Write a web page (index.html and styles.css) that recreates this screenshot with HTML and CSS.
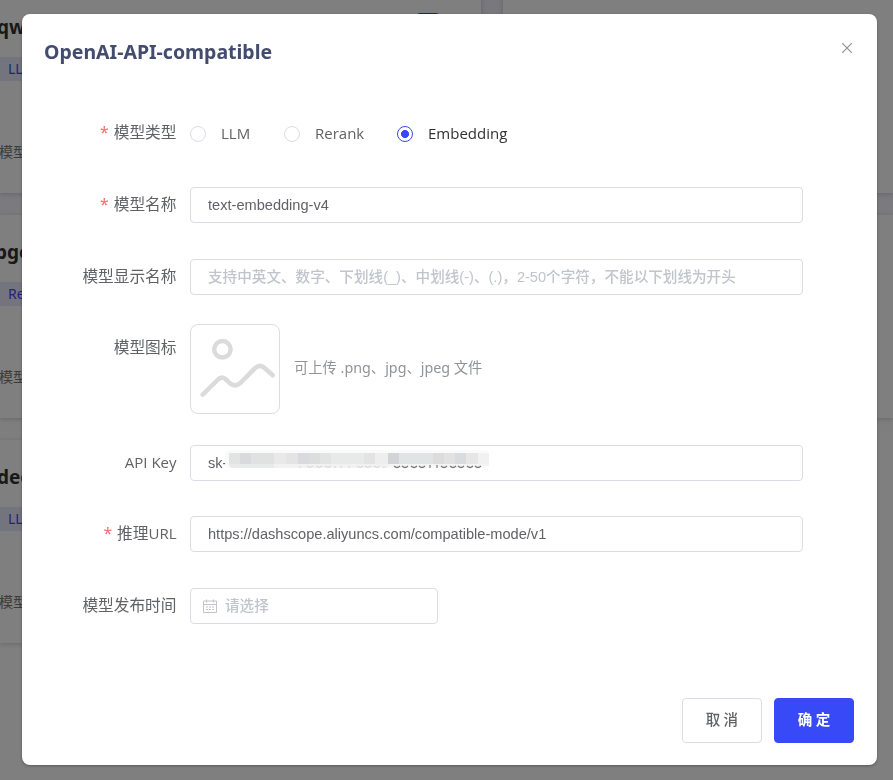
FILE: index.html
```html
<!DOCTYPE html>
<html lang="zh-CN">
<head>
<meta charset="utf-8">
<title>OpenAI-API-compatible</title>
<link rel="stylesheet" href="styles.css">
</head>
<body>
<main class="models">
  <article class="card"><i class="switch"></i><h3>qw</h3><span class="tag">LLM</span><p>模型</p></article>
  <article class="card"></article>
  <article class="card"><h3 class="shift">bge</h3><span class="tag">Re</span><p>模型</p></article>
  <article class="card"></article>
  <article class="card"><h3>dee</h3><span class="tag">LLM</span><p>模型</p></article>
</main>
<div class="mask">
  <section class="dialog">
    <header class="head">
      <h2>OpenAI-API-compatible</h2>
      <svg class="close" viewBox="0 0 12 12"><path d="M1.200 1.200l9.600 9.600M10.800 1.200l-9.600 9.600"/></svg>
    </header>
    <form class="form">
      <div class="row type">
        <label class="label"><i>*</i>模型类型</label>
        <div class="radios">
          <span class="radio"><b></b><span class="t1">LLM</span></span>
          <span class="radio"><b></b><span class="t2">Rerank</span></span>
          <span class="radio on"><b></b><span class="t3">Embedding</span></span>
        </div>
      </div>
      <div class="row name">
        <label class="label"><i>*</i>模型名称</label>
        <input class="input" value="text-embedding-v4">
      </div>
      <div class="row show">
        <label class="label">模型显示名称</label>
        <input class="input" placeholder="支持中英文、数字、下划线(_)、中划线(-)、(.)，2-50个字符，不能以下划线为开头">
      </div>
      <div class="row icon">
        <label class="label">模型图标</label>
        <div class="upload">
          <svg viewBox="0 0 88 88"><circle cx="31.400" cy="24.300" r="8.200"/><path d="M11.700 69.700L26.500 55Q30.700 50.500 35 54.500L39 58.300Q44 62.500 49 58.300L64 43.200Q68.500 38.800 73 42.500L81.700 50.300"/></svg>
        </div>
        <span class="hint">可上传 .png、jpg、jpeg 文件</span>
      </div>
      <div class="row key">
        <label class="label lat">API Key</label>
        <div class="keybox">
          <input class="input" value="sk-">
          <svg class="mosaic" viewBox="0 0 270 22">
            <rect x="1" y="1" width="264" height="18" rx="5" fill="#fafafa"/>
            <g shape-rendering="crispEdges">
              <path fill="#e2e3e3" d="M5 4h11v11H5zM140 4h11v11h-11z"/>
              <path fill="#d9dadb" d="M16 4h11v11H16z"/>
              <path fill="#e0e1e1" d="M27 4h23v11H27z"/>
              <path fill="#e9e9e9" d="M50 4h12v11H50z"/>
              <path fill="#e4e4e4" d="M62 4h12v11H62z"/>
              <path fill="#d9dadd" d="M74 4h11v11H74z"/>
              <path fill="#dcdddd" d="M85 4h11v11H85z"/>
              <path fill="#e2e4e4" d="M96 4h11v11H96z"/>
              <path fill="#e8eae9" d="M107 4h33v11h-33z"/>
              <path fill="#eee" d="M151 4h13v11h-13z"/>
              <path fill="#d3d4d7" d="M164 4h11v11h-11z"/>
              <path fill="#e1e4e4" d="M175 4h34v11h-34z"/>
              <path fill="#dcdcdc" d="M209 4h11v11h-11z"/>
              <path fill="#e2e2e2" d="M220 4h11v11h-11z"/>
              <path fill="#dadbdc" d="M231 4h11v11h-11z"/>
              <path fill="#e6e6e6" d="M242 4h12v11h-12z"/>
              <path fill="#f1f1f1" d="M254 4h11v11h-11z"/>
              <path fill="#e9ebea" d="M5 15h45v4H9q-4 0-4-4z"/>
              <path fill="#f2f2f2" d="M50 15h114v4H50z"/>
              <path fill="#f4f4f4" d="M164 15h101v2H164z"/>
            </g>
            <path class="faint" d="M76 17v2M83 17q3 3 6 0M92 17q3 3 6 0M101 17q3 3 6 0M111 17v2M117 17v2M125 17v2M133 17q3 3 6 0M141 17q3 3 6 0M150 17q3 3 6 0M160 17v2"/>
            <path class="edge" d="M170 17q3 3 6 0M178 17q3 3 6 0M187 17q3 3 6 0M195 17q3 3 6 0M206 16v3M213 16v3M217 17q3 3 6 0M226 17q3 3 6 0M234 17q3 3 6 0M243 17q3 3 6 0M251 17q3 3 6 0"/>
          </svg>
        </div>
      </div>
      <div class="row url">
        <label class="label"><i>*</i>推理<span class="lat">URL</span></label>
        <input class="input" value="https://dashscope.aliyuncs.com/compatible-mode/v1">
      </div>
      <div class="row date">
        <label class="label">模型发布时间</label>
        <div class="input picker">
          <svg viewBox="0 0 14 14"><path d="M.5 2h13v11.500H.5zM.5 5.500h13M3.500 .5v3M10.500 .5v3M3 8h2M6 8h2M9 8h2M3 10.500h2M6 10.500h2M9 10.500h2"/></svg>
          <span>请选择</span>
        </div>
      </div>
    </form>
    <footer class="foot">
      <button class="btn">取 消</button>
      <button class="btn primary">确 定</button>
    </footer>
  </section>
</div>
</body>
</html>
```
FILE: styles.css
```css
* { box-sizing: border-box; }
body { margin: 0; height: 780px; overflow: hidden; background: linear-gradient(#f0f0fc 0, #fff 480px); font-family: "Noto Sans", "Noto Sans CJK SC", sans-serif; }
.models { display: grid; grid-template-columns: 481px 390px; grid-auto-rows: 203px; gap: 22px; height: 780px; margin-top: -10px; overflow: hidden; }
.card { position: relative; background: #fff; box-shadow: 0 1px 5px rgba(60, 60, 90, .25); padding: 20px 0 0; }
.card h3 { margin: 0 0 0 -3px; font-size: 19px; line-height: 34px; color: #303133; }
.card .shift { margin-left: -5px; }
.switch { position: absolute; left: 417px; top: 23px; width: 22px; height: 10px; border-radius: 3px; background: #384af7; }
.tag { display: block; width: 60px; height: 24px; margin-top: 13px; padding-left: 8px; background: #e8e9ff; color: #384af7; font-size: 14px; line-height: 24px; }
.card p { margin: 60px 0 0 -1px; font-size: 14px; line-height: 22px; color: #777; }
.mask { position: fixed; inset: 0; padding: 14px 16px 15px 22px; background: rgba(0, 0, 0, .5); }
.dialog { display: flex; flex-direction: column; height: 751px; border-radius: 8px; background: #fff; box-shadow: 0 1px 3px rgba(0, 0, 0, .3); }
.head { display: flex; justify-content: space-between; padding: 24px 24px 0 22px; }
.head h2 { margin: 0; font-size: 19.500px; line-height: 28px; color: #434c6e; }
.close { width: 12px; height: 12px; margin-top: 3.500px; fill: none; stroke: #909399; stroke-width: 1.200; }
.form { padding: 49px 74px 0 0; flex: 1; }
.row { display: flex; height: 36px; margin-bottom: 36px; }
.label { width: 168px; padding-right: 13.500px; margin-top: -1px; flex: none; text-align: right; font: 15.700px/36px "Noto Sans CJK SC", sans-serif; color: #606266; }
.label i { font-style: normal; color: #f56c6c; margin-right: 5px; font-family: "Noto Sans"; }
.lat { font-family: "Open Sans", "Noto Sans", sans-serif; font-size: 15px; }
.input { flex: 1; width: 100%; height: 36px; padding: 0 17px; border: 1px solid #dcdce6; border-radius: 4px; outline: 0; background: #fff; color: #606266; font: 14.600px "Liberation Sans", "Noto Sans CJK SC", sans-serif; }
.input::placeholder { color: #c0c4cc; font-weight: 500; }
.radios { display: flex; }
.radio { display: flex; align-items: center; font: 15px "Open Sans", sans-serif; color: #606266; }
.radio b { width: 16px; height: 16px; margin: 2px 15px 0 0; border: 1px solid #dcdce6; border-radius: 50%; }
.radio span { display: block; }
.t1 { width: 63px; }
.t2 { width: 82px; }
.radio.on { color: #303133; }
.on b { border-color: #384af7; background: radial-gradient(circle, #384af7 3.700px, #fff 4.300px); }
.show { margin-bottom: 0; }
.icon { height: 90px; margin: 29px 0 31px; }
.icon .label { margin-top: 5px; }
.upload { width: 90px; height: 90px; border: 1px solid #dcdce6; border-radius: 8px; }
.upload svg { display: block; fill: none; stroke: #dbdbdb; stroke-width: 4.500; stroke-linecap: round; }
.hint { margin-left: 14px; font: 14.300px/88px "Noto Sans", "Noto Sans CJK SC"; color: #909399; }
.key { margin-bottom: 35px; }
.keybox { position: relative; flex: 1; }
.mosaic { position: absolute; left: 34px; top: 4px; width: 270px; height: 22px; }
.faint, .edge { fill: none; stroke: #d5d5d5; }
.edge { stroke: #77797d; stroke-width: 1.200; }
.picker { flex: none; width: 248px; display: flex; align-items: center; padding: 0 12px; color: #c0c4cc; font-weight: 500; }
.picker span { margin-top: -3px; }
.picker svg { width: 14px; height: 14px; margin-right: 8px; fill: none; stroke: #c0c4cc; }
.foot { display: flex; justify-content: flex-end; gap: 12px; padding: 0 23px 22px 0; }
.btn { width: 80px; height: 45px; padding: 0 0 4px; border: 1px solid #dcdce6; border-radius: 4px; background: #fff; color: #606266; font: 500 14.500px "Noto Sans CJK SC", sans-serif; }
.primary { border-color: #384af7; background: #384af7; color: #fff; font-weight: 700; }
```
